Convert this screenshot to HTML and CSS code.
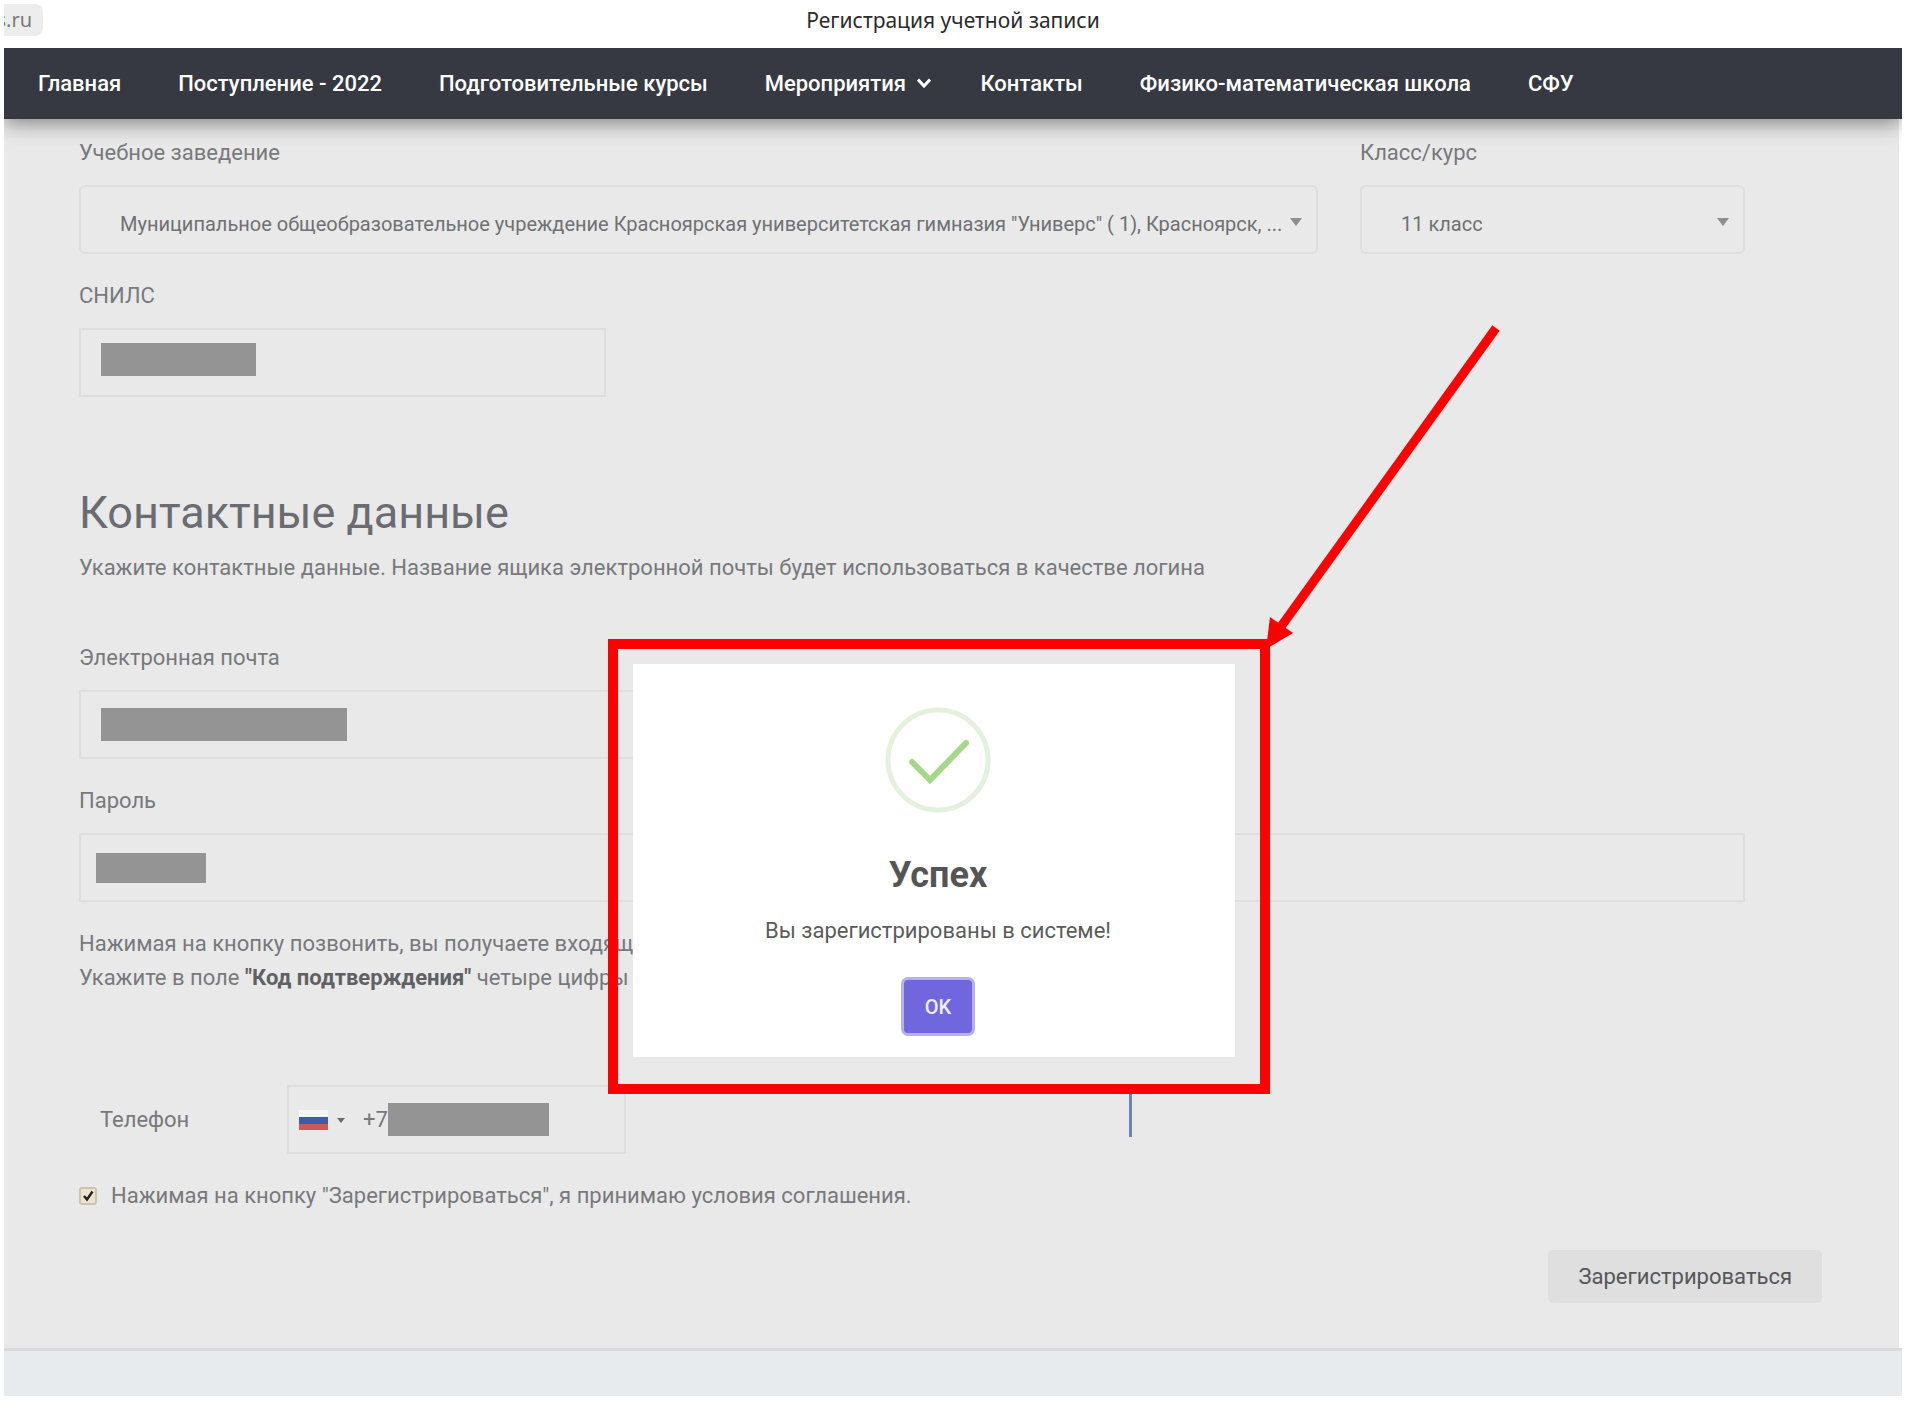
FILE: index.html
```html
<!DOCTYPE html>
<html lang="ru">
<head>
    <meta charset="UTF-8">
    <meta name="viewport" content="width=device-width, initial-scale=1.0">
    <title>Регистрация учетной записи</title>
    <link rel="stylesheet" href="styles.css">
</head>
<body>

    <header class="top-bar">
        <span class="site-address">s.ru</span>
        <span class="page-title">Регистрация учетной записи</span>
    </header>

    <nav class="main-nav">
        <a href="#">Главная</a>
        <a href="#">Поступление - 2022</a>
        <a href="#">Подготовительные курсы</a>
        <a href="#">Мероприятия
            <svg class="chevron" viewBox="0 0 14 10"><path d="M1 1.5 L7 8 L13 1.5" /></svg>
        </a>
        <a href="#">Контакты</a>
        <a href="#">Физико-математическая школа</a>
        <a href="#">СФУ</a>
    </nav>

    <main class="panel">
        <form>
            <div class="fields">
                <div class="field col-9">
                    <label for="school">Учебное заведение</label>
                    <div class="select-wrap">
                        <select id="school">
                            <option>Муниципальное общеобразовательное учреждение Красноярская университетская гимназия "Универс" ( 1), Красноярск, ...</option>
                        </select>
                    </div>
                </div>
                <div class="field col-3">
                    <label for="grade">Класс/курс</label>
                    <div class="select-wrap">
                        <select id="grade">
                            <option>11 класс</option>
                        </select>
                    </div>
                </div>
                <div class="field col-4">
                    <label for="snils">СНИЛС</label>
                    <div class="input-wrap">
                        <input type="text" id="snils">
                        <span class="mask mask-snils"></span>
                    </div>
                </div>
            </div>

            <h1>Контактные данные</h1>
            <p class="intro">Укажите контактные данные. Название ящика электронной почты будет использоваться в качестве логина</p>

            <div class="fields">
                <div class="field col-8">
                    <label for="email">Электронная почта</label>
                    <div class="input-wrap">
                        <input type="email" id="email">
                        <span class="mask mask-email"></span>
                    </div>
                </div>
                <div class="field col-12">
                    <label for="password">Пароль</label>
                    <div class="input-wrap">
                        <input type="password" id="password">
                        <span class="mask mask-password"></span>
                    </div>
                </div>
            </div>

            <p class="hint">Нажимая на кнопку позвонить, вы получаете входящий звонок.<br>
            Укажите в поле <b>"Код подтверждения"</b> четыре цифры номера.</p>

            <div class="phone-row">
                <label for="phone">Телефон</label>
                <div class="input-wrap phone-wrap">
                    <input type="tel" id="phone" value="+7">
                    <svg class="flag" viewBox="0 0 46 20">
                        <rect width="29" height="7" fill="#f4f4f4" />
                        <rect y="7" width="29" height="7" fill="#3e5ba9" />
                        <rect y="14" width="29" height="6" fill="#cb5a55" />
                        <path d="M38 8 H46 L42 13 Z" fill="#6b6b6b" />
                    </svg>
                    <span class="mask mask-phone"></span>
                </div>
                <span class="call-edge"></span>
            </div>

            <div class="agree">
                <input type="checkbox" id="agree" checked>
                <label for="agree">Нажимая на кнопку "Зарегистрироваться", я принимаю условия соглашения.</label>
            </div>

            <div class="actions">
                <button type="button" class="register">Зарегистрироваться</button>
            </div>
        </form>

        <!-- success message -->
        <div class="highlight">
            <div class="modal" role="dialog" aria-labelledby="modal-title">
                <svg class="success-icon" viewBox="0 0 106 106">
                    <circle cx="53" cy="53" r="50" fill="none" stroke="#e4f1dc" stroke-width="5" />
                    <path d="M27 55 L45 73 L81 36" fill="none" stroke="#a5d88a" stroke-width="6" stroke-linecap="round" />
                </svg>
                <h2 id="modal-title">Успех</h2>
                <p>Вы зарегистрированы в системе!</p>
                <button type="button" class="ok">OK</button>
            </div>
        </div>
        <svg class="arrow" viewBox="0 0 240 330">
            <path d="M230 8 L14 308" stroke="#ff0000" stroke-width="9" />
            <path d="M0 329 L4 297 L27 313 Z" fill="#ff0000" />
        </svg>
    </main>

    <footer class="footer"></footer>

</body>
</html>
```

FILE: styles.css
```css
* {
    box-sizing: border-box;
    margin: 0;
    padding: 0;
    font-family: Roboto, "Liberation Sans", sans-serif;
}
body {
    background-color: #fff;
    padding: 0 4px 6px 4px;
    font-size: 22px;
    line-height: 34px;
    color: #77797c;
}
.top-bar {
    display: grid;
    grid-template-columns: 1fr auto 1fr;
    align-items: center;
    height: 48px;
    padding-bottom: 8px;
}
.site-address {
    justify-self: start;
    width: 39px;
    height: 32px;
    overflow: hidden;
    display: flex;
    justify-content: flex-end;
    align-items: center;
    padding-right: 11px;
    background-color: #ededed;
    border-radius: 0 8px 8px 0;
    font-family: "Noto Sans", sans-serif;
    font-size: 20px;
}
.page-title {
    font-family: "Noto Sans", sans-serif;
    font-size: 21px;
    color: #2b2b2b;
}
.main-nav {
    position: relative;
    z-index: 1;
    display: flex;
    align-items: center;
    gap: 57px;
    height: 71px;
    padding: 0 34px;
    background-color: #363941;
    box-shadow: 0 4px 20px rgba(0, 0, 0, 0.45);
    clip-path: inset(0 0 -40px 0);
}
.main-nav a {
    color: #fff;
    font-size: 22px;
    font-weight: 500;
    text-decoration: none;
    white-space: nowrap;
}
.chevron {
    width: 14px;
    height: 10px;
    margin-left: 6px;
    margin-right: -8px;
    vertical-align: 3px;
    fill: none;
    stroke: #fff;
    stroke-width: 3;
}
.panel {
    position: relative;
    margin-right: 3px;
    padding: 17px 77px 45px 75px;
    background-color: #e9e9e9;
}
.fields {
    display: grid;
    grid-template-columns: repeat(12, 1fr);
    gap: 25px 42px;
    padding-right: 77px;
}
.field label {
    display: block;
    margin-bottom: 15px;
}
.col-3 {
    grid-column: span 3;
}
.col-4 {
    grid-column: span 4;
}
.col-8 {
    grid-column: span 8;
}
.col-9 {
    grid-column: span 9;
}
.col-12 {
    grid-column: span 12;
}
.input-wrap, .select-wrap {
    position: relative;
}
.input-wrap input, .select-wrap select {
    display: block;
    width: 100%;
    height: 69px;
    border: 2px solid #dedede;
    background-color: transparent;
    color: #77797c;
    font-size: 22px;
    outline: none;
}
.select-wrap select {
    appearance: none;
    padding: 8px 30px 0 39px;
    border-radius: 6px;
    font-size: 20px;
    color: #6f7174;
}
.select-wrap::after {
    content: "";
    position: absolute;
    right: 16px;
    top: 33px;
    border: 6px solid transparent;
    border-top: 8px solid #8e8e8e;
    border-bottom: none;
}
/* grey bars over personal data */
.mask {
    position: absolute;
    left: 22px;
    top: 18px;
    height: 33px;
    background-color: #949494;
}
.mask-snils {
    top: 15px;
    width: 155px;
}
.mask-email {
    width: 246px;
}
.mask-password {
    left: 17px;
    top: 20px;
    width: 110px;
    height: 30px;
}
.mask-phone {
    left: 101px;
    width: 161px;
}
h1 {
    margin-top: 89px;
    font-size: 45px;
    font-weight: 400;
    line-height: 54px;
    color: #6a6c71;
}
.intro {
    margin: 11px 0 56px;
}
.hint {
    margin-top: 25px;
}
.hint b {
    color: #5f6165;
}
.phone-row {
    display: flex;
    align-items: center;
    margin-top: 90px;
    padding-left: 21px;
}
.phone-row label {
    width: 187px;
}
.phone-wrap {
    width: 339px;
}
.phone-wrap input {
    padding-left: 74px;
}
.flag {
    position: absolute;
    left: 12px;
    top: 25px;
    width: 46px;
    height: 20px;
}
.call-edge {
    align-self: flex-start;
    width: 3px;
    height: 52px;
    margin-left: 503px;
    background-color: #6d84b4;
}
.agree {
    display: flex;
    align-items: center;
    gap: 14px;
    margin-top: 25px;
}
.agree input {
    appearance: none;
    width: 18px;
    height: 18px;
    border: 2px solid #cdc5ab;
    border-radius: 3px;
    background: #ece5cd url("data:image/svg+xml,%3Csvg xmlns='http://www.w3.org/2000/svg' viewBox='0 0 14 14'%3E%3Cpath d='M3 7 L6 10.5 L11.5 2.5' fill='none' stroke='%23222' stroke-width='2.4'/%3E%3C/svg%3E") center no-repeat;
}
.actions {
    display: flex;
    justify-content: flex-end;
    margin-top: 37px;
}
.register {
    padding: 0 30px;
    height: 53px;
    border: none;
    border-radius: 5px;
    background-color: #dfdfdf;
    color: #55575b;
    font-size: 22px;
    cursor: pointer;
}
.highlight {
    position: absolute;
    left: 604px;
    top: 520px;
    width: 662px;
    height: 455px;
    padding: 15px 25px 0 15px;
    border: 10px solid #ff0000;
}
.modal {
    height: 393px;
    padding: 43px 0 0 8px;
    background-color: #fff;
    text-align: center;
    color: #5c5c5c;
}
.success-icon {
    display: block;
    width: 106px;
    height: 106px;
    margin: 0 auto;
}
.modal h2 {
    margin-top: 38px;
    font-size: 36px;
    font-weight: 700;
    line-height: 48px;
    color: #555;
}
.modal p {
    margin-top: 16px;
    line-height: 32px;
}
.ok {
    width: 68px;
    height: 53px;
    margin-top: 33px;
    border: none;
    border-radius: 4px;
    background-color: #7066dd;
    box-shadow: 0 0 0 3px #b5afec;
    color: #f0eefc;
    font-size: 20px;
    font-weight: 500;
    cursor: pointer;
}
.arrow {
    position: absolute;
    left: 1262px;
    top: 201px;
    width: 240px;
    height: 330px;
}
.footer {
    height: 48px;
    border-top: 3px solid #d8dcde;
    background-color: #e8ebee;
}
```
